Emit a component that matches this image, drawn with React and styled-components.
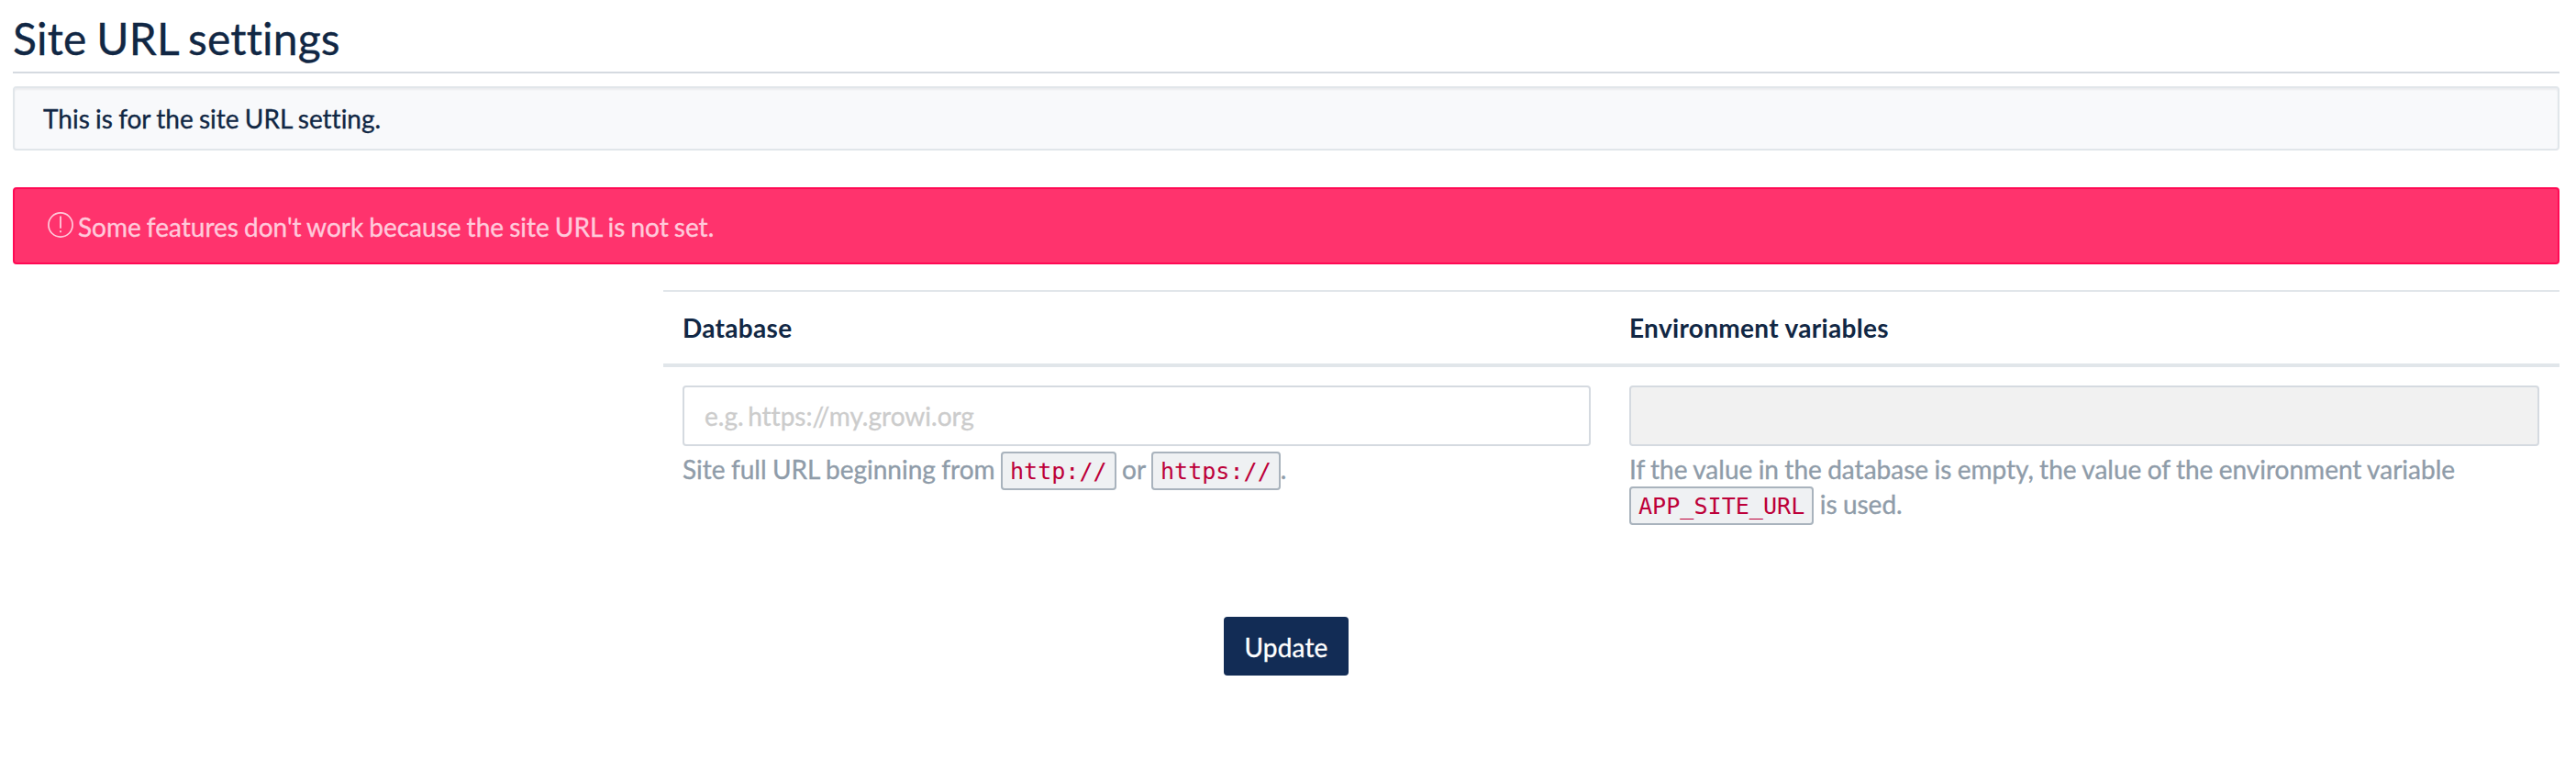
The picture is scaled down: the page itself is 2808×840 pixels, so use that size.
import React from "react";
import styled, { createGlobalStyle } from "styled-components";

const GlobalStyle = createGlobalStyle`
  *, *::before, *::after { box-sizing: border-box; }
  body {
    margin: 0;
    background: #fff;
    color: #112744;
    font-family: Lato, sans-serif;
    font-size: 28px;
    line-height: 38px;
    font-variant-ligatures: no-common-ligatures;
    word-spacing: -1.1px;
    -webkit-text-stroke: 0.35px currentColor;
  }
`;

const Page = styled.main`
  padding: 12px 18px 0 14px;
`;

const Heading = styled.h2`
  margin: 0 0 14px;
  height: 68px;
  border-bottom: 2px solid #d5dae0;
  font-size: 48px;
  font-weight: 400;
  line-height: 60px;
  word-spacing: -1.8px;
  letter-spacing: 0.18px;
`;

const Well = styled.p`
  margin: 0 0 40px;
  height: 70px;
  padding: 14px 31px;
  border: 2px solid #e1e6ea;
  border-radius: 4px;
  background: #f8f9fb;
  box-shadow: inset 0 2px 2px rgba(0, 0, 0, 0.05);
  word-spacing: -0.9px;
`;

const Alert = styled.div`
  display: flex;
  align-items: center;
  gap: 5px;
  height: 84px;
  margin-bottom: 28px;
  padding: 2px 36px 0;
  border: 2px solid #ff0a54;
  border-radius: 4px;
  background: #ff336d;
  color: #ffcadb;
`;

const AlertIcon = styled.svg`
  width: 28px;
  height: 28px;
  margin-top: -4px;
  flex: none;
`;

const SettingsTable = styled.table`
  width: 2067px;
  margin: 0 0 0 auto;
  border-collapse: separate;
  border-spacing: 0;
  table-layout: fixed;
`;

const HeadCell = styled.th`
  width: ${(p) => p.$width};
  height: 84px;
  padding: 0 21px;
  border-top: 2px solid #e1e6ea;
  border-bottom: 4px solid #e1e6ea;
  text-align: left;
  font-weight: 700;
  letter-spacing: 0.32px;
  word-spacing: 0;
  -webkit-text-stroke: 0;
`;

const Cell = styled.td`
  padding: 20px 21px;
  vertical-align: top;

  &:last-child {
    padding-right: 22px;
  }
`;

const TextInput = styled.input`
  display: block;
  width: 100%;
  height: 66px;
  padding: 0 22px;
  border: 2px solid #d5dae0;
  border-radius: 4px;
  background: ${(p) => (p.readOnly ? "#f1f1f1" : "#fff")};
  color: inherit;
  font: inherit;
  font-variant-ligatures: no-common-ligatures;
  word-spacing: -2.6px;
  outline: none;

  &::placeholder {
    color: #ccc;
    opacity: 1;
  }
`;

const Help = styled.p`
  margin: 6px 0 0;
  color: #8f9ca9;
  word-spacing: -0.8px;
`;

const Code = styled.code`
  padding: 5px 8px 4px;
  border: 2px solid #a9b3bd;
  border-radius: 4px;
  background: #eff1f3;
  color: #bd0039;
  font-family: "DejaVu Sans Mono", monospace;
  font-size: 25.1px;
  line-height: 1;
  -webkit-text-stroke: 0;
`;

const Actions = styled.div`
  display: flex;
  justify-content: center;
  margin-top: 84px;
`;

const Button = styled.button`
  width: 136px;
  height: 64px;
  padding: 2px 0 0;
  border: 0;
  border-radius: 4px;
  background: #122c55;
  color: #fff;
  font: inherit;
  letter-spacing: 0.2px;
`;

export default function App() {
  return (
    <>
      <GlobalStyle />
      <Page>
        <Heading>Site URL settings</Heading>
        <Well>This is for the site URL setting.</Well>
        <Alert role="alert">
          <AlertIcon viewBox="0 0 28 28" fill="none" aria-hidden="true">
            <circle cx="14" cy="14" r="13.1" stroke="currentColor" strokeWidth="1.7" />
            <path d="M14 4.5v13.2M14 20.3v2" stroke="currentColor" strokeWidth="1.8" />
          </AlertIcon>
          <span>Some features don't work because the site URL is not set.</span>
        </Alert>
        <SettingsTable>
          <thead>
            <tr>
              <HeadCell $width="1032px">Database</HeadCell>
              <HeadCell $width="1035px">Environment variables</HeadCell>
            </tr>
          </thead>
          <tbody>
            <tr>
              <Cell>
                <TextInput type="text" placeholder="e.g. https://my.growi.org" />
                <Help>
                  Site full URL beginning from <Code>http://</Code> or <Code>https://</Code>.
                </Help>
              </Cell>
              <Cell>
                <TextInput type="text" readOnly />
                <Help>
                  If the value in the database is empty, the value of the environment variable
                  <br />
                  <Code>APP_SITE_URL</Code> is used.
                </Help>
              </Cell>
            </tr>
          </tbody>
        </SettingsTable>
        <Actions>
          <Button type="button">Update</Button>
        </Actions>
      </Page>
    </>
  );
}
